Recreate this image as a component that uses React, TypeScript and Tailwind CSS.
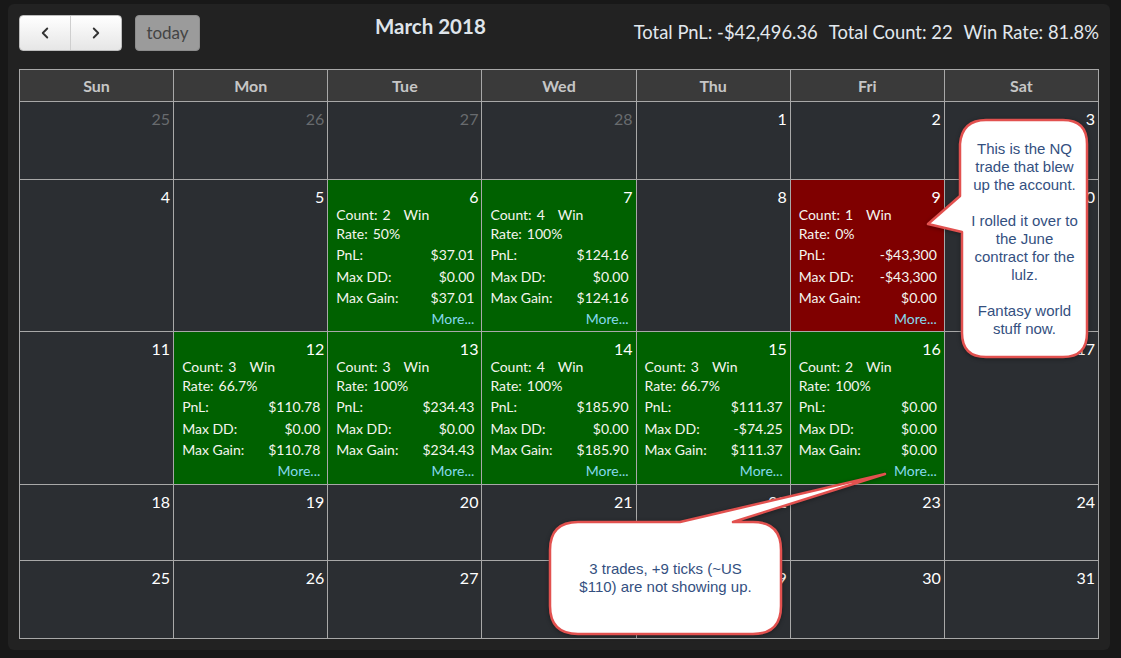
import { ChevronLeft, ChevronRight } from "lucide-react";

type Stats = {
  count: number;
  rate: string;
  pnl: string;
  dd: string;
  gain: string;
  loss?: boolean;
};

type Day = { n: number; other?: boolean; stats?: Stats };

const weekdays = ["Sun", "Mon", "Tue", "Wed", "Thu", "Fri", "Sat"];

const weeks: Day[][] = [
  [
    { n: 25, other: true },
    { n: 26, other: true },
    { n: 27, other: true },
    { n: 28, other: true },
    { n: 1 },
    { n: 2 },
    { n: 3 },
  ],
  [
    { n: 4 },
    { n: 5 },
    { n: 6, stats: { count: 2, rate: "50%", pnl: "$37.01", dd: "$0.00", gain: "$37.01" } },
    { n: 7, stats: { count: 4, rate: "100%", pnl: "$124.16", dd: "$0.00", gain: "$124.16" } },
    { n: 8 },
    {
      n: 9,
      stats: { count: 1, rate: "0%", pnl: "-$43,300", dd: "-$43,300", gain: "$0.00", loss: true },
    },
    { n: 10 },
  ],
  [
    { n: 11 },
    { n: 12, stats: { count: 3, rate: "66.7%", pnl: "$110.78", dd: "$0.00", gain: "$110.78" } },
    { n: 13, stats: { count: 3, rate: "100%", pnl: "$234.43", dd: "$0.00", gain: "$234.43" } },
    { n: 14, stats: { count: 4, rate: "100%", pnl: "$185.90", dd: "$0.00", gain: "$185.90" } },
    { n: 15, stats: { count: 3, rate: "66.7%", pnl: "$111.37", dd: "-$74.25", gain: "$111.37" } },
    { n: 16, stats: { count: 2, rate: "100%", pnl: "$0.00", dd: "$0.00", gain: "$0.00" } },
    { n: 17 },
  ],
  [18, 19, 20, 21, 22, 23, 24].map((n) => ({ n })),
  [25, 26, 27, 28, 29, 30, 31].map((n) => ({ n })),
];

const Row = ({ label, value }: { label: string; value: string }) => (
  <div className="flex justify-between leading-[21.5px]">
    <span>{label}</span>
    <span>{value}</span>
  </div>
);

const DayCell = ({ day }: { day: Day }) => {
  const s = day.stats;
  const bg = s ? (s.loss ? "bg-[#7f0000]" : "bg-[#006100]") : "bg-[#2b2e32]";

  return (
    <div className={`${bg} flex flex-col`}>
      <div
        className={`pt-[9px] pr-[3px] text-right text-[16px] leading-[16px] ${
          day.other ? "text-[#686b6e]" : "text-white"
        }`}
      >
        {day.n}
      </div>
      {s && (
        <div className="pl-[8px] pr-[7px] text-[14px] text-[#f5f5ee]">
          <div className="leading-[19px]">
            Count:<span className="ml-[5px]">{s.count}</span>
            <span className="ml-[13px]">Win</span>
          </div>
          <div className="leading-[19px]">
            Rate:<span className="ml-[5px]">{s.rate}</span>
          </div>
          <div className="mt-px">
            <Row label="PnL:" value={s.pnl} />
            <Row label="Max DD:" value={s.dd} />
            <Row label="Max Gain:" value={s.gain} />
          </div>
          <div className="text-right leading-[20px] text-[#86d9ee]">More...</div>
        </div>
      )}
    </div>
  );
};

// speech-bubble note pinned over the calendar
const Note = ({
  className,
  width,
  height,
  path,
  textClass,
  lines,
}: {
  className: string;
  width: number;
  height: number;
  path: string;
  textClass: string;
  lines: string[];
}) => (
  <div className={`absolute ${className}`}>
    <svg width={width} height={height} className="absolute inset-0 drop-shadow-[0_1px_2px_rgba(0,0,0,0.35)]">
      <path d={path} fill="#ffffff" stroke="#e2514f" strokeWidth={2.5} strokeLinejoin="round" />
    </svg>
    <div
      className={`absolute flex flex-col items-center justify-center text-center font-['Liberation_Sans',Arial,sans-serif] text-[15px] leading-[18px] text-[#34507f] ${textClass}`}
    >
      {lines.map((l, i) => (
        <div key={i} className="whitespace-nowrap">
          {l === "" ? "\u00a0" : l}
        </div>
      ))}
    </div>
  </div>
);

export default function App() {
  return (
    <div className="relative h-[658px] w-full bg-[#181818] pt-[4px] pl-[8px] font-['Lato',sans-serif]">
      <div className="h-[646px] w-[1102px] rounded-[6px] bg-[#222222] px-[11px] pt-[11px]">
        {/* toolbar */}
        <div className="mb-[18px] flex h-[36px] items-start">
          <div className="flex h-[36px] overflow-hidden rounded-[4px] border border-[#bdbdbd] bg-gradient-to-b from-white to-[#e6e6e6]">
            <button className="flex w-[51px] items-center justify-center border-r border-[#cfcfcf] text-[#333]">
              <ChevronLeft size={18} strokeWidth={2.5} />
            </button>
            <button className="flex w-[50px] items-center justify-center text-[#333]">
              <ChevronRight size={18} strokeWidth={2.5} />
            </button>
          </div>
          <button className="ml-[13px] h-[36px] w-[65px] rounded-[4px] border border-[#8c8c8c] bg-[#9b9b9b] text-[17px] text-[#444]">
            today
          </button>
          <div className="flex-1 pl-[27px] text-center">
            <h2 className="text-[20.5px] font-bold leading-[22px] text-[#dfe4ea]">March 2018</h2>
          </div>
          <div className="flex h-[36px] items-center text-[18.4px] text-[#e2e8ee]">
            <span>Total PnL: -$42,496.36</span>
            <span className="ml-[11px]">Total Count: 22</span>
            <span className="ml-[11px]">Win Rate: 81.8%</span>
          </div>
        </div>

        {/* month grid */}
        <div className="grid grid-cols-7 grid-rows-[31px_77px_151px_152px_75px_77px] gap-px bg-[#a8a8a8] p-px">
          {weekdays.map((d) => (
            <div
              key={d}
              className="bg-[#3a3a3a] text-center text-[16px] font-bold leading-[31px] text-[#c6c6c6]"
            >
              {d}
            </div>
          ))}
          {weeks.flat().map((day, i) => (
            <DayCell key={i} day={day} />
          ))}
        </div>
      </div>

      <Note
        className="left-[926px] top-[118px] h-[242px] w-[166px]"
        width={166}
        height={242}
        path="M60 2 H137 Q161 2 161 26 V215 Q161 239 137 239 H60 Q36 239 36 215 V114 L2 106 L34 78 V26 Q36 2 60 2 Z"
        textClass="left-[36px] top-[2px] h-[237px] w-[125px]"
        lines={[
          "This is the NQ",
          "trade that blew",
          "up the account.",
          "",
          "I rolled it over to",
          "the June",
          "contract for the",
          "lulz.",
          "",
          "Fantasy world",
          "stuff now.",
        ]}
      />
      <Note
        className="left-[546px] top-[470px] h-[168px] w-[344px]"
        width={344}
        height={168}
        path="M32 52 H134 L339 4 L187 52 H207 Q235 52 235 80 V136 Q235 164 207 164 H32 Q4 164 4 136 V80 Q4 52 32 52 Z"
        textClass="left-[4px] top-[52px] h-[112px] w-[231px]"
        lines={["3 trades, +9 ticks (~US", "$110) are not showing up."]}
      />
    </div>
  );
}
